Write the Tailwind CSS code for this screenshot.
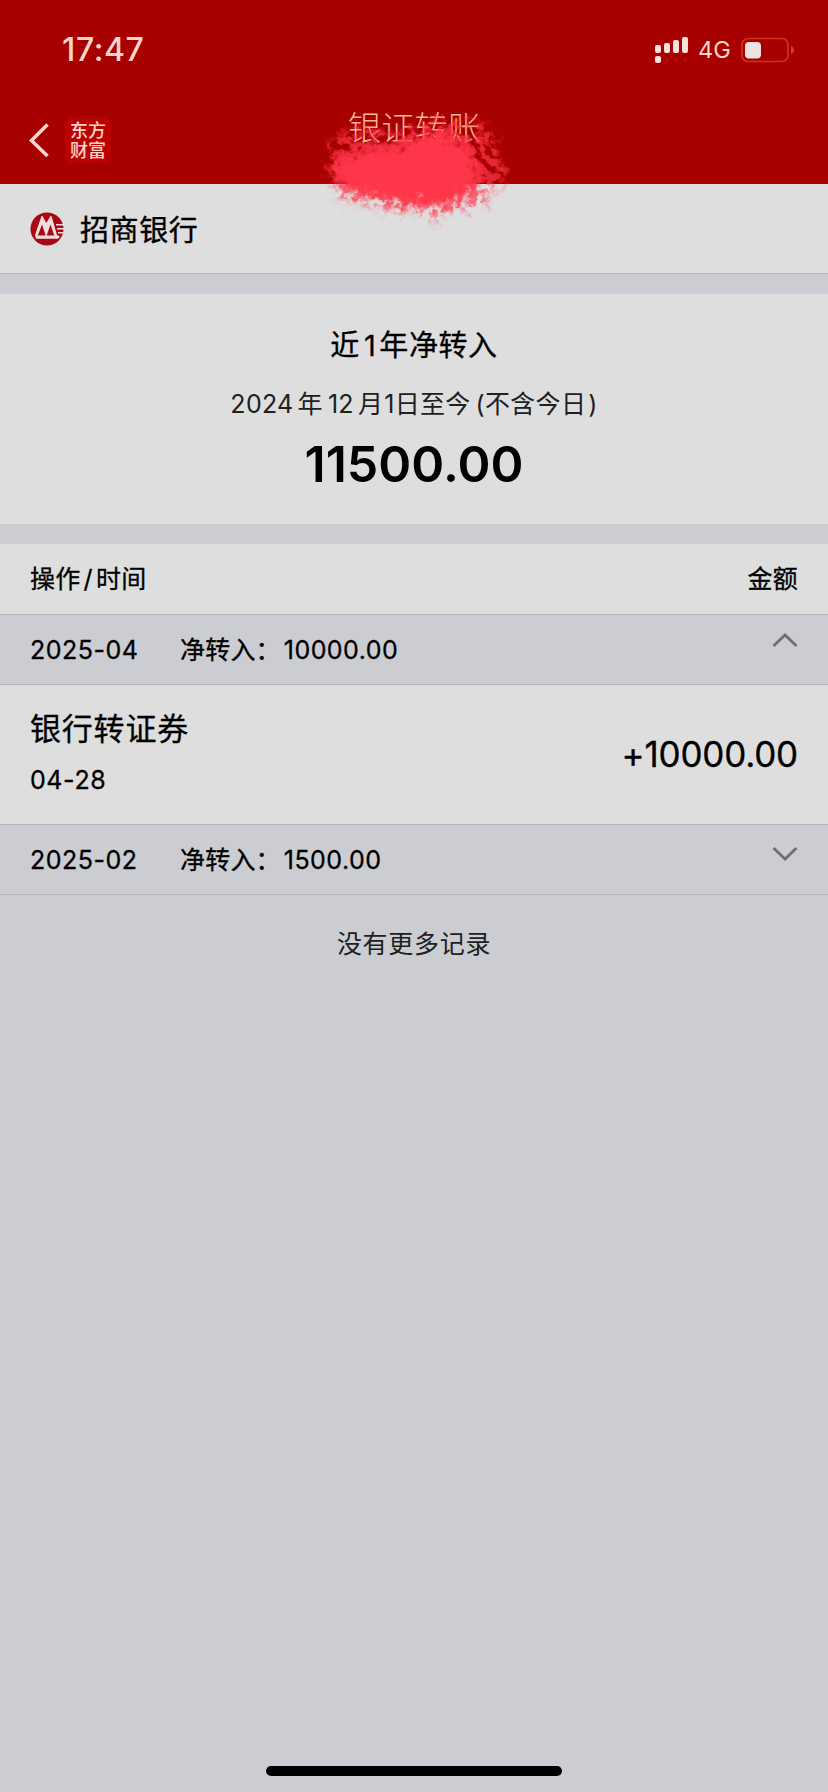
<!DOCTYPE html>
<html lang="zh-CN">
<head>
<meta charset="utf-8">
<title>银证转账</title>
<script src="https://cdn.jsdelivr.net/npm/@tailwindcss/browser@4"></script>
</head>
<body class="bg-[#cccdd2]">
<div class="relative flex h-[1792px] w-[828px] flex-col overflow-hidden bg-[#cccdd2] font-['Inter','Noto_Sans_CJK_SC',sans-serif] whitespace-nowrap text-black">
  <header class="flex h-[184px] shrink-0 flex-col bg-[#a60000] text-[#fcd5c8]">
    <div class="flex h-[100px] items-center justify-between pr-[33px] pl-[62px]">
      <span class="text-[32px] leading-none font-medium tracking-[0.6px]">17:47</span>
      <div class="flex items-center">
        <svg class="h-[30px] w-[36px]" viewBox="0 0 36 30" fill="#fce0da">
          <rect x="1" y="10" width="6" height="8" rx="2"/><rect x="10" y="8" width="6" height="10" rx="2"/><rect x="19" y="5" width="6" height="13" rx="2"/><rect x="28" y="2" width="6" height="16" rx="2"/><rect x="1" y="21" width="6" height="7" rx="2"/>
          <g fill="#b80d08"><circle cx="13" cy="25" r="2"/><circle cx="22" cy="25" r="2"/><circle cx="31" cy="25" r="2"/></g>
        </svg>
        <span class="ml-[8px] w-[43px] text-[23.500px] leading-none">4G</span>
        <svg class="h-[26px] w-[54px]" viewBox="0 0 54 26"><rect x="1" y="1.500" width="46" height="23" rx="6" fill="none" stroke="#d0351c" stroke-width="1.700"/><rect x="4" y="5" width="16" height="16.500" rx="4" fill="#eee3e1"/><path d="M50 9q3 1 3 4t-3 4z" fill="#d83b26"/></svg>
      </div>
    </div>
    <div class="flex h-[84px] items-start pl-[29px]">
      <svg class="mt-[22px] h-[36px] w-[20px]" viewBox="0 0 20 36" fill="none" stroke="#fcd8cd" stroke-width="3.500"><path d="M18.500 2.500 2.500 18.500l16 15.500"/></svg>
      <div class="mt-[17px] ml-[16px] flex h-[46px] w-[46px] flex-col items-center justify-center rounded-[8px] bg-[#bb0202] pb-[2px] font-['Noto_Sans_CJK_SC'] text-[18px] leading-[20px] font-medium"><span>东方</span><span>财富</span></div>
      <h1 class="mt-[8px] ml-[237px] text-[33px] leading-[40px] font-light tracking-[0.3px] text-[#f8b79b]">银证转账</h1>
    </div>
  </header>

  <section class="flex h-[90px] shrink-0 items-center border-b border-[#b4b4b7] bg-[#dedede] pl-[30px]">
    <svg class="h-[34px] w-[34px]" viewBox="0 0 34 34"><circle cx="17" cy="17" r="16.500" fill="#a80813"/><g fill="#f5dcdc"><path d="M5 23 11.500 4h1l3.800 7L20.500 4h1L27 23l3 1.500-2 2.200H6z"/><path d="M26 12h8v1.500h-8zM27 16h7v1.500h-7zM28 20h5v1.500h-5z"/></g><path d="m12 12.500 3.700 11H7.800zM20.500 12.500l3.700 11h-7.500z" fill="#a80813"/></svg>
    <span class="mt-[3px] ml-[16px] text-[29px] leading-none tracking-[0.6px] [-webkit-text-stroke:0.4px_black]">招商银行</span>
  </section>

  <section class="mt-[20px] flex h-[230px] shrink-0 flex-col items-center bg-[#dedede]">
    <div class="mt-[32px] flex text-[29px] leading-[40px] tracking-[0.6px] [-webkit-text-stroke:0.3px_black]"><span>近</span><span class="mr-[3px] ml-[4px]">1</span><span>年净转入</span></div>
    <div class="mt-[20px] flex text-[25px] leading-[36px] tracking-[0.3px] text-[#202020]"><span>2024</span><span class="ml-[4px]">年</span><span class="ml-[5px]">12</span><span class="ml-[4px]">月</span><span class="ml-px">1</span><span>日至今</span><span class="ml-[5px]">(</span><span>不含今日</span><span class="ml-[2px]">)</span></div>
    <div class="mt-[12px] text-[50px] leading-[60px] font-semibold">11500.00</div>
  </section>

  <section class="mt-[20px] flex shrink-0 flex-col [-webkit-text-stroke:0.3px_black]">
    <div class="flex h-[71px] items-center justify-between border-b border-[#b4b4b7] bg-[#dedede] px-[30px] pt-[2px] text-[25px] tracking-[0.3px]"><div class="flex"><span>操作</span><span class="mx-[3px]">/</span><span>时间</span></div><span>金额</span></div>
    <div class="flex h-[70px] items-center border-b border-[#b4b4b7] px-[30px] pt-[2px] text-[25px]"><span class="w-[150px] tracking-[0.5px]">2025-04</span><span class="tracking-[0.2px]">净转入：</span><span class="ml-[3px] tracking-[0.45px]">10000.00</span><svg class="mb-[21px] ml-auto h-[16px] w-[26px]" viewBox="0 0 26 16" fill="none" stroke="#6e6f72" stroke-width="2.800"><path d="M1.500 14 13 3l11.500 11"/></svg></div>
    <div class="flex h-[140px] items-center justify-between border-b border-[#b4b4b7] bg-[#dedede] px-[30px]">
      <div class="mb-[5px] flex flex-col"><span class="text-[31px] leading-[44px] tracking-[0.8px]">银行转证券</span><span class="mt-[11px] text-[25px] leading-[36px] tracking-[0.6px]">04-28</span></div>
      <span class="text-[35px] tracking-[-0.2px]">+10000.00</span>
    </div>
    <div class="flex h-[70px] items-center border-b border-[#b4b4b7] px-[30px] pt-[2px] text-[25px]"><span class="w-[150px] tracking-[0.5px]">2025-02</span><span class="tracking-[0.2px]">净转入：</span><span class="ml-[3px] tracking-[0.45px]">1500.00</span><svg class="mb-[14px] ml-auto h-[16px] w-[26px]" viewBox="0 0 26 16" fill="none" stroke="#6e6f72" stroke-width="2.800"><path d="M1.500 2 13 13 24.500 2"/></svg></div>
  </section>
  <p class="mt-[31px] text-center text-[25px] leading-[36px] tracking-[0.7px] text-[#202020]">没有更多记录</p>
  <div class="mt-auto mb-[16px] h-[10px] w-[296px] shrink-0 self-center rounded-full bg-black"></div>

  <!-- Brush mark over the title -->
  <svg class="absolute top-[90px] left-[300px] h-[150px] w-[240px]" viewBox="0 0 240 150">
    <defs>
      <filter id="rough" x="-20%" y="-20%" width="140%" height="140%">
        <feGaussianBlur in="SourceGraphic" stdDeviation="4" result="soft"/>
        <feTurbulence type="fractalNoise" baseFrequency="0.13" numOctaves="4" seed="8" result="noise"/>
        <feDisplacementMap in="soft" in2="noise" scale="20" xChannelSelector="R" yChannelSelector="G" result="edge"/>
        <feColorMatrix in="noise" type="matrix" values="0 0 0 0 1  0 0 0 0 1  0 0 0 0 1  0 0 6 0 -2.400" result="mask"/>
        <feComposite in="edge" in2="mask" operator="in"/>
      </filter>
      <filter id="edge" x="-20%" y="-20%" width="140%" height="140%">
        <feGaussianBlur in="SourceGraphic" stdDeviation="4" result="soft"/>
        <feTurbulence type="fractalNoise" baseFrequency="0.12" numOctaves="4" seed="3" result="noise"/>
        <feDisplacementMap in="soft" in2="noise" scale="22" xChannelSelector="R" yChannelSelector="G"/>
      </filter>
    </defs>
    <path d="M28 54 50 36 85 42 118 36 145 29 184 33 196 49 202 70 208 88 190 100 186 113 160 120 142 122 133 136 126 122 85 120 62 112 40 111 40 98 27 86Z" fill="#ff3548" opacity=".75" filter="url(#rough)"/>
    <path d="M36 70 60 60 105 54 122 43 148 44 170 60 178 80 176 94 162 109 138 116 100 114 70 106 46 102 34 84Z" fill="#ff3548" filter="url(#edge)"/>
  </svg>
</div>
</body>
</html>
